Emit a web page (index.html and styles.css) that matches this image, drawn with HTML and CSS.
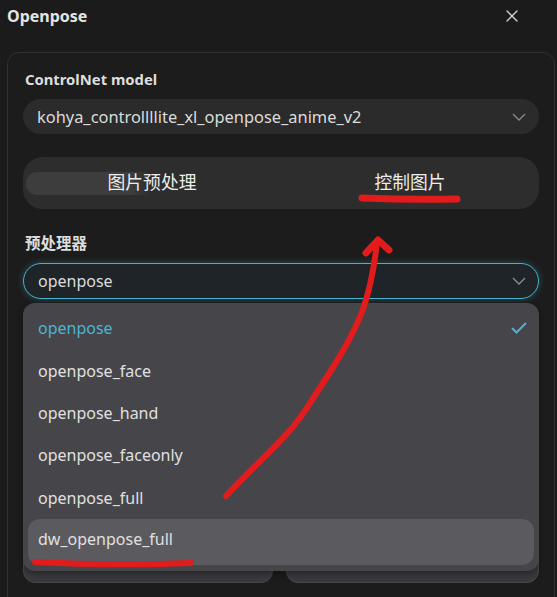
FILE: index.html
```html
<!DOCTYPE html>
<html>
<head>
<meta charset="utf-8">
<link rel="stylesheet" href="styles.css">
</head>
<body>
<div class="header">
  <div class="title">Openpose</div>
  <svg class="close" width="12" height="12" viewBox="0 0 12 12"><path d="M1 1L11 11M11 1L1 11" stroke="#cfcfcf" stroke-width="1.4" stroke-linecap="round"/></svg>
</div>
<div class="card">
  <div class="label">ControlNet model</div>
  <div class="select">
    <span>kohya_controllllite_xl_openpose_anime_v2</span>
    <svg class="chev" width="14" height="8" viewBox="0 0 14 8"><path d="M1 1L7 7L13 1" fill="none" stroke="#8a8a8a" stroke-width="1.3"/></svg>
  </div>
  <div class="tabs">
    <div class="tab-indicator"></div>
    <div class="tab">图片预处理</div>
    <div class="tab">控制图片</div>
  </div>
  <div class="label label2">预处理器</div>
  <div class="select-wrap">
    <div class="select active">
      <span>openpose</span>
      <svg class="chev" width="14" height="8" viewBox="0 0 14 8"><path d="M1 1L7 7L13 1" fill="none" stroke="#8a8f94" stroke-width="1.3"/></svg>
    </div>
    <div class="menu">
      <div class="item selected"><span>openpose</span>
        <svg width="16" height="12" viewBox="0 0 16 12"><path d="M1.5 6.5L5.5 10.5L14.5 1.5" fill="none" stroke="#4cb3d4" stroke-width="2" stroke-linecap="round"/></svg>
      </div>
      <div class="item">openpose_face</div>
      <div class="item">openpose_hand</div>
      <div class="item">openpose_faceonly</div>
      <div class="item">openpose_full</div>
      <div class="item hover">dw_openpose_full</div>
    </div>
  </div>
  <div class="buttons">
    <div class="btn"></div>
    <div class="btn"></div>
  </div>
</div>
<svg class="annot" width="557" height="597" viewBox="0 0 557 597">
  <g fill="none" stroke="#e21c1c" stroke-linecap="round" stroke-linejoin="round">
    <path d="M362 198 Q410 200 457 199" stroke-width="7"/>
    <path d="M35 562 Q110 566 191 563" stroke-width="6"/>
    <path d="M226 496 C250 470 275 448 292 428 C300 418 306 410 312 400 C335 365 352 338 362 312 C370 290 374 270 377 242" stroke-width="6"/>
    <path d="M366 253 L378 240 L389 250" stroke-width="7"/>
  </g>
</svg>
</body>
</html>
```
FILE: styles.css
```css
* { box-sizing: border-box; }
html, body { margin: 0; padding: 0; }
body {
  width: 557px;
  height: 597px;
  overflow: hidden;
  background: #1b1b1b;
  font-family: "Noto Sans", "Noto Sans CJK SC", sans-serif;
  color: #e2e2e2;
  position: relative;
}
.header {
  height: 32px;
  display: flex;
  align-items: center;
  justify-content: space-between;
  padding: 0 39px 0 7px;
}
.title {
  font-size: 16px;
  font-weight: 700;
  color: #e4e4e4;
}
.card {
  margin: 20px 2px 0 7px;
  border: 1px solid #303030;
  border-radius: 12px;
  padding: 16px 15px 0;
  background: #1c1c1c;
  height: 565px;
  overflow: hidden;
}
.label {
  font-size: 14.8px;
  font-weight: 700;
  line-height: 20px;
  height: 20px;
  padding-left: 2px;
  color: #dedede;
}
.select {
  margin-top: 10px;
  height: 35px;
  border-radius: 18px;
  background: #2b2b2b;
  display: flex;
  align-items: center;
  justify-content: space-between;
  padding: 0 13px 0 14px;
  font-size: 16.4px;
  color: #dcdcdc;
}
.tabs {
  position: relative;
  margin-top: 23px;
  height: 52px;
  border-radius: 20px;
  background: #2d2d2d;
  display: grid;
  grid-template-columns: 1fr 1fr;
  align-items: center;
}
.tab {
  position: relative;
  text-align: center;
  font-size: 17.8px;
  color: #ececec;
  font-family: "Noto Sans CJK SC", sans-serif;
  line-height: 24px;
  padding-bottom: 4px;
}
.tab-indicator {
  position: absolute;
  left: 3px;
  top: 15px;
  width: 124px;
  height: 23px;
  border-radius: 12px 0 0 12px;
  background: linear-gradient(90deg, #3d3d3d 0%, #3d3d3d 85%, rgba(61,61,61,0) 100%);
}
.label2 {
  margin-top: 23px;
  font-family: "Noto Sans CJK SC", sans-serif;
  font-size: 15.5px;
}
.select-wrap {
  position: relative;
  margin-top: 11px;
}
.select.active {
  margin-top: 0;
  height: 36px;
  background: #1e2428;
  border: 1.5px solid #44b2cd;
  box-shadow: 0 0 7px rgba(68,178,205,0.35);
  padding: 0 12px 0 14px;
  font-size: 16px;
}
.menu {
  position: absolute;
  left: 0;
  right: 0;
  top: 40px;
  height: 268px;
  background: #46454a;
  border-radius: 12px;
  padding: 4px 5px;
  box-shadow: 0 3px 6px rgba(0,0,0,0.35);
  z-index: 2;
}
.item {
  height: 42.4px;
  display: flex;
  align-items: center;
  justify-content: space-between;
  padding: 0 7px 0 10px;
  font-size: 16px;
  color: #e0e0e0;
  border-radius: 12px;
}
.item.selected { color: #4cb3d4; }
.item.hover {
  background: #5b5a5f;
  height: 46px;
  align-items: flex-start;
  padding-top: 9px;
}
.buttons {
  margin-top: 244px;
  display: grid;
  grid-template-columns: 250px 253px;
  gap: 13px;
}
.btn {
  height: 40px;
  border-radius: 12px;
  background: #3a3a3e;
  border: 1px solid #48484c;
}
.annot {
  position: absolute;
  left: 0;
  top: 0;
  z-index: 5;
  pointer-events: none;
}
```
